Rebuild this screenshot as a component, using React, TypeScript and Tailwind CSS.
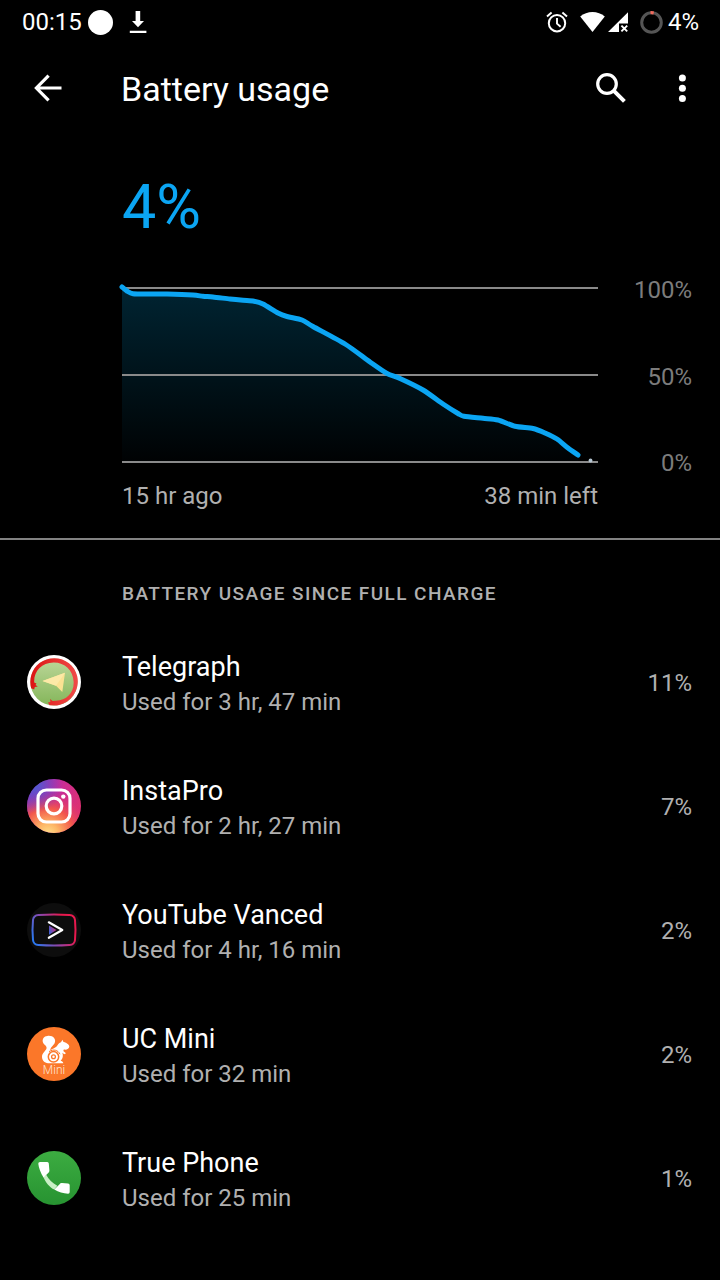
import type { ReactNode } from "react";

type Point = [number, number];

// Battery level samples on a 476 x 174 grid (y = 0 is 100%, y = 174 is 0%).
const LEVELS: Point[] = [
  [0, -1], [5, 3], [11, 5.7], [28, 6], [45, 6], [71, 7], [81, 8.3], [91, 9], [108, 11],
  [121, 12.3], [132, 13.2], [141, 16], [156, 25], [165, 28.5], [180, 32], [191, 38.5],
  [223, 56], [248, 74], [265, 85.5], [278, 90.5], [301, 102], [321, 116], [336, 125.5],
  [342, 128.3], [361, 130.3], [376, 132], [393, 138.3], [411, 140.5], [423, 145],
  [435, 151], [446, 160], [456, 167],
];

function smooth(points: Point[]): string {
  let d = `M${points[0][0]} ${points[0][1]}`;
  for (let i = 0; i < points.length - 1; i++) {
    const a = points[Math.max(i - 1, 0)];
    const b = points[i];
    const c = points[i + 1];
    const e = points[Math.min(i + 2, points.length - 1)];
    d += `C${b[0] + (c[0] - a[0]) / 8} ${b[1] + (c[1] - a[1]) / 8} ${c[0] - (e[0] - b[0]) / 8} ${c[1] - (e[1] - b[1]) / 8} ${c[0]} ${c[1]}`;
  }
  return d;
}

const LINE = smooth(LEVELS);

function StatusBar() {
  return (
    <div className="flex h-11 items-center justify-between pr-[21px] pl-[22px] text-2xl leading-7">
      <div className="flex items-center">
        <span className="mr-1.5">00:15</span>
        <span className="mr-4 size-[25px] rounded-full bg-white" />
        <svg className="h-6 w-[18px]" viewBox="0 0 18 24" fill="#fff" aria-hidden="true">
          <path d="M6.6 1h4.6v10H15l-6 6.200L3 11h3.600zM.8 20.800h16.600v2.200H.8z" />
        </svg>
      </div>
      <div className="flex items-center">
        <svg className="mr-[12px] size-[22px]" viewBox="0 0 22 22" fill="none" stroke="#fff" aria-hidden="true">
          <circle cx="11" cy="12.2" r="8.2" strokeWidth="2" />
          <path d="M11 7v5.600l3.600 3.200" strokeWidth="1.9" />
          <path d="M1 5.400 5.600 1.500M21 5.400l-4.600-3.900" strokeWidth="2" />
        </svg>
        <svg className="mr-[3px] h-[22px] w-[25px]" viewBox="0 0 25 22" fill="#fff" aria-hidden="true">
          <path d="M.2 5.600C7-.4 18-.4 24.800 5.600L12.500 21z" />
        </svg>
        <svg className="mr-[12px] h-[22px] w-5" viewBox="0 0 20 22" aria-hidden="true">
          <path d="M0 21 20 1.200V12.400H11V21z" fill="#fff" />
          <path d="m13.400 14.600 5.800 5.800m0-5.800-5.800 5.800" stroke="#fff" strokeWidth="1.9" />
        </svg>
        <svg className="mr-[5px] size-[23px]" viewBox="0 0 23 23" fill="none" aria-hidden="true">
          <circle cx="11.5" cy="11.5" r="9.8" stroke="#555" strokeWidth="3" />
          <path d="M10.500 1.750a9.800 9.800 0 0 1 3.200.2" stroke="#f26a5c" strokeWidth="3.2" />
        </svg>
        <span>4%</span>
      </div>
    </div>
  );
}

function AppBar() {
  return (
    <header className="flex h-[88px] items-center pr-5 pl-[34px]">
      <button type="button" aria-label="Back" className="mr-[59px]">
        <svg className="size-7" viewBox="0 0 28 28" fill="none" stroke="#fff" strokeWidth="3.2" aria-hidden="true">
          <path d="M27.500 14H3M14.600 1.600 2.400 14l12.200 12.400" />
        </svg>
      </button>
      <h1 className="flex-1 pt-0.5 text-[34px] leading-10">Battery usage</h1>
      <button type="button" aria-label="Search" className="mr-[38px]">
        <svg className="size-[30px]" viewBox="0 0 30 30" fill="none" stroke="#fff" aria-hidden="true">
          <circle cx="11" cy="11" r="9.3" strokeWidth="3.2" />
          <path d="m17.400 17.400 11 11" strokeWidth="4" />
        </svg>
      </button>
      <button type="button" aria-label="More options">
        <svg className="h-[30px] w-9" viewBox="0 0 36 30" fill="#fff" aria-hidden="true">
          <circle cx="18.400" cy="4.900" r="3.500" />
          <circle cx="18.400" cy="15.200" r="3.500" />
          <circle cx="18.400" cy="25.500" r="3.500" />
        </svg>
      </button>
    </header>
  );
}

function Chart() {
  return (
    <section className="border-b-2 border-[#828282] pr-7 pb-7 pl-[122px]">
      <p className="pt-10 text-[61px] leading-[70px] text-[#0ba5f3]">4%</p>
      <div className="mt-[34px] flex">
        <div className="flex-1 pt-[12px]">
          <svg
            className="block h-[174px] w-full overflow-visible"
            viewBox="0 0 476 174"
            preserveAspectRatio="none"
            role="img"
            aria-label="Battery level over time"
          >
            <defs>
              <linearGradient id="fill" gradientUnits="userSpaceOnUse" x1="0" y1="0" x2="0" y2="174">
                <stop offset="0" stopColor="#002432" />
                <stop offset="1" stopColor="#000203" />
              </linearGradient>
            </defs>
            <path d={`${LINE}V174H0Z`} fill="url(#fill)" />
            <path d="M0 0H476M0 87H476M0 174H476" stroke="#8a8a8a" strokeWidth="2" />
            <path d={LINE} fill="none" stroke="#0ba5f3" strokeWidth="5" strokeLinecap="round" strokeLinejoin="round" />
            <circle cx="468.500" cy="172.500" r="1.900" fill="#b4c4d0" />
          </svg>
          <div className="mt-5 flex justify-between text-2xl leading-7 text-[#b0b0b0]">
            <span>15 hr ago</span>
            <span>38 min left</span>
          </div>
        </div>
        <div className="flex h-[201px] w-[94px] flex-col justify-between text-right text-2xl leading-7 text-[#7c7c7c]">
          <span>100%</span>
          <span>50%</span>
          <span>0%</span>
        </div>
      </div>
    </section>
  );
}

function TelegraphIcon() {
  return (
    <svg className="size-full" viewBox="0 0 54 54" aria-hidden="true">
      <defs>
        <linearGradient id="tg" x1="0" y1="0" x2="0" y2="1">
          <stop offset="0" stopColor="#bdd79a" />
          <stop offset="1" stopColor="#84b65a" />
        </linearGradient>
        <linearGradient id="tr" x1="0" y1="0" x2="1" y2="0">
          <stop offset="0" stopColor="#dc1414" />
          <stop offset="1" stopColor="#f04a48" />
        </linearGradient>
      </defs>
      <circle cx="27" cy="27" r="27" fill="#fff" />
      <circle cx="27" cy="27" r="23.600" fill="url(#tg)" />
      <path d="M4.200 33.200C.8 21.500 7.600 8 19.500 4.500 33-.2 47.500 8 50.300 21.500 53 35 44 48.500 30 50.500l-7.500-.3-1.500-2.700 2.400-.4-.4-3.100 2.700 2 2.800-.3C39.500 46 47.400 37.500 46.600 26.500 46 15 37.500 7.200 26.500 7.400 14.500 7.600 6.500 16.500 7.200 27.500l2.300 1-1 1.600 2.300 1.400-3 .5-.6 2.500Z" fill="url(#tr)" />
      <path d="M15.500 26 38 17.800 35.300 37 29 30.700Z" fill="#fae293" />
      <path d="m15.500 26 13.500 4.700L38 17.800Z" fill="#fce9a7" />
    </svg>
  );
}

function InstaIcon() {
  return (
    <svg className="size-full" viewBox="0 0 54 54" aria-hidden="true">
      <defs>
        <linearGradient id="ib" x1="0" y1=".4" x2="1" y2=".6">
          <stop offset="0" stopColor="#8a35c0" />
          <stop offset=".5" stopColor="#c52d9c" />
          <stop offset="1" stopColor="#de2f70" />
        </linearGradient>
        <radialGradient id="iy" gradientUnits="userSpaceOnUse" cx="21" cy="55" r="43">
          <stop offset="0" stopColor="#ffe08a" />
          <stop offset=".25" stopColor="#fdb565" />
          <stop offset=".6" stopColor="#f2574c" />
          <stop offset="1" stopColor="#e0306f" stopOpacity="0" />
        </radialGradient>
        <radialGradient id="iv" gradientUnits="userSpaceOnUse" cx="8" cy="6" r="28">
          <stop offset="0" stopColor="#4c5ed3" />
          <stop offset="1" stopColor="#6a40c8" stopOpacity="0" />
        </radialGradient>
      </defs>
      <circle cx="27" cy="27" r="27" fill="url(#ib)" />
      <circle cx="27" cy="27" r="27" fill="url(#iy)" />
      <circle cx="27" cy="27" r="27" fill="url(#iv)" />
      <g fill="none" stroke="#fff" strokeWidth="3.200">
        <rect x="11" y="11" width="32" height="32" rx="8.500" />
        <circle cx="27" cy="27" r="7.800" />
      </g>
      <circle cx="36.300" cy="17.600" r="2.200" fill="#fff" />
    </svg>
  );
}

function VancedIcon() {
  return (
    <svg className="size-full" viewBox="0 0 54 54" aria-hidden="true">
      <defs>
        <linearGradient id="yv" x1="0" y1=".8" x2="1" y2=".4">
          <stop offset="0" stopColor="#2a78f0" />
          <stop offset=".5" stopColor="#9b3fa0" />
          <stop offset=".85" stopColor="#e8194e" />
        </linearGradient>
        <linearGradient id="yp" x1="0" y1=".8" x2="1" y2=".4">
          <stop offset="0" stopColor="#3b62d8" />
          <stop offset="1" stopColor="#c8307a" />
        </linearGradient>
      </defs>
      <circle cx="27" cy="27" r="27" fill="#0d0d0d" />
      <path d="M11.500 12Q27 11 42.500 12 47.500 12.300 48 17 49 27 48 37 47.500 41.700 42.500 42 27 43 11.500 42 6.500 41.700 6 37 5 27 6 17 6.500 12.300 11.500 12Z" fill="none" stroke="url(#yv)" strokeWidth="2" />
      <path d="m22 22.500 7.500 4.500-7.500 4.800Z" fill="url(#yp)" />
      <path d="M21.800 19.300 35.300 27 21.800 34.800" fill="none" stroke="#fff" strokeWidth="2.200" strokeLinecap="round" strokeLinejoin="round" />
    </svg>
  );
}

function UcIcon() {
  return (
    <svg className="size-full" viewBox="0 0 54 54" aria-hidden="true">
      <circle cx="27" cy="27" r="27" fill="#fb7729" />
      <path d="M20.300 9C17 9.200 15 12 15.900 15.200 16.800 18 20.200 18.500 19.500 21.500 18.700 24 15 26 15 29.800 15 33.300 17.500 36 21 36.200H36.300C36.200 34.800 34.500 34.200 33.600 33.800 36 31.500 36.400 28.500 35.300 25.800L37.300 27.300 39 26.300 36.300 24 36.800 22.600C39.500 23.200 42.300 22 42.300 19.600 42 17 38.500 15.400 36.200 14.800L35.600 12.800 33.900 15.200C31.500 15.800 31 18 29.600 19.600 28 21.300 25 21.800 23.300 23.500 23.200 20.500 26 18.800 27.600 16.200 29.700 12 25.500 8 20.300 9Z" fill="#fff" />
      <circle cx="26.500" cy="29.800" r="5.200" fill="none" stroke="#fb7729" strokeWidth="1.500" />
      <circle cx="26.500" cy="29.800" r="1.900" fill="none" stroke="#fb7729" strokeWidth="1.300" />
      <path d="M22 24.600c4.500-2.700 9-1.700 11 2.600" fill="none" stroke="#fb7729" strokeWidth="1" />
      <text x="27" y="46.500" textAnchor="middle" fontSize="12" fontFamily="Roboto, sans-serif" fontWeight="300" fill="#ffe3d2">Mini</text>
    </svg>
  );
}

function PhoneIcon() {
  return (
    <svg className="size-full" viewBox="0 0 54 54" aria-hidden="true">
      <defs>
        <linearGradient id="ph" x1="0" y1="0" x2="0" y2="1">
          <stop offset="0" stopColor="#3cac41" />
          <stop offset="1" stopColor="#279331" />
        </linearGradient>
      </defs>
      <circle cx="27" cy="27" r="27" fill="url(#ph)" />
      <path d="m16.300 25.800 2.900-2C21.500 28.300 25.500 32.300 30.300 34.800L27.300 38.600C22.800 36.500 18.300 31.500 16.300 25.800Z" fill="#c9efc6" />
      <path d="M13 11H20.300Q21.700 11 21.800 12.500L22.400 19.500Q22.500 20.600 21.700 21.400L16.500 26.600C13.600 22 11.600 16.500 11.300 12.800Q11.200 11 13 11ZM27.300 38.600 32.600 33.300Q33.400 31.700 35 31.900L41 32.500Q42.700 32.700 42.700 34.300V41Q42.700 42.800 41 42.700C36.300 42.600 31.600 41.300 27.300 38.600Z" fill="#fff" />
    </svg>
  );
}

const APPS: { name: string; used: string; share: string; icon: ReactNode }[] = [
  { name: "Telegraph", used: "Used for 3 hr, 47 min", share: "11%", icon: <TelegraphIcon /> },
  { name: "InstaPro", used: "Used for 2 hr, 27 min", share: "7%", icon: <InstaIcon /> },
  { name: "YouTube Vanced", used: "Used for 4 hr, 16 min", share: "2%", icon: <VancedIcon /> },
  { name: "UC Mini", used: "Used for 32 min", share: "2%", icon: <UcIcon /> },
  { name: "True Phone", used: "Used for 25 min", share: "1%", icon: <PhoneIcon /> },
];

export default function App() {
  return (
    <div className="min-h-screen bg-black font-['Roboto',sans-serif] text-white">
      <StatusBar />
      <AppBar />
      <main>
        <Chart />
        <h2 className="pt-10 pb-3 pl-[122px] text-[19px] leading-7 font-medium tracking-[0.075em] text-[#b0b0b0]">
          BATTERY USAGE SINCE FULL CHARGE
        </h2>
        <ul>
          {APPS.map((app) => (
            <li key={app.name} className="flex h-[124px] items-center pr-7 pl-[27px]">
              <div className="mr-[41px] size-[54px] shrink-0">{app.icon}</div>
              <div className="flex-1 pt-1">
                <p className="text-[27px] leading-9">{app.name}</p>
                <p className="text-2xl leading-[34px] text-[#b0b0b0]">{app.used}</p>
              </div>
              <span className="pt-0.5 text-2xl leading-7 text-[#b0b0b0]">{app.share}</span>
            </li>
          ))}
        </ul>
      </main>
    </div>
  );
}
